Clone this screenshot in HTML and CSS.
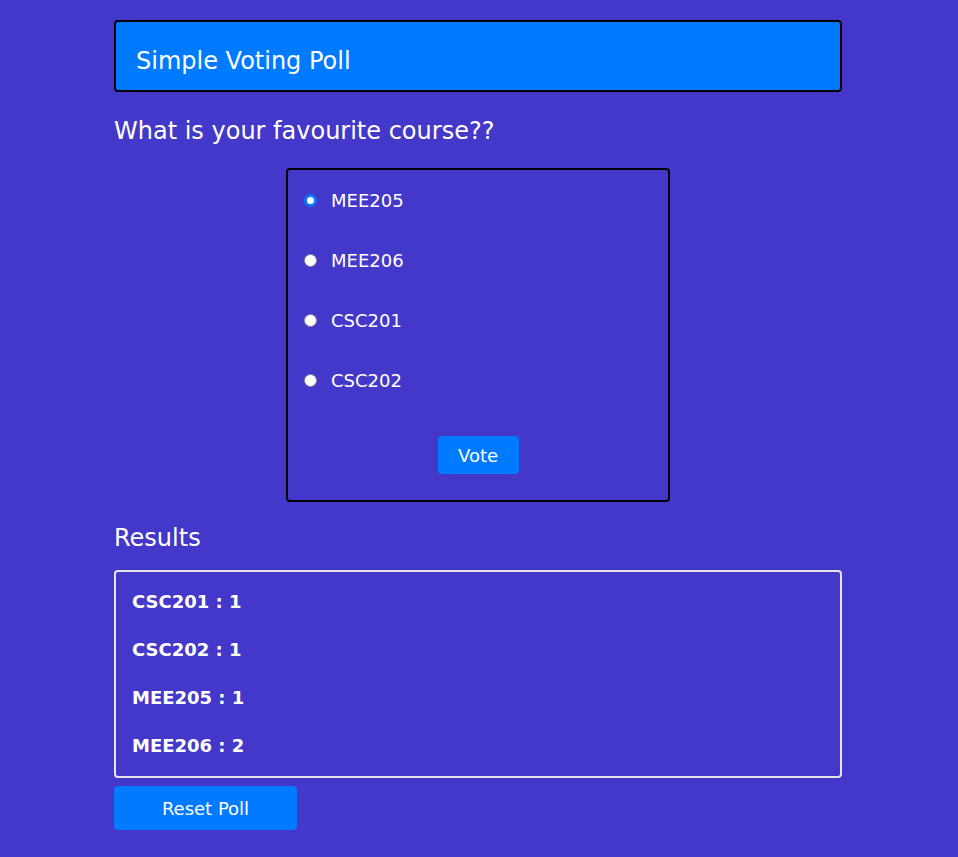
FILE: index.html
```html
<!DOCTYPE html>
<html lang="en">
<head>
<meta charset="utf-8">
<title>Simple Voting Poll</title>
<link rel="stylesheet" href="styles.css">
</head>
<body>
<div class="container">
  <header class="header">
    <h1 class="title">Simple Voting Poll</h1>
  </header>
  <h2 class="question">What is your favourite course??</h2>
  <form class="options">
    <label class="option"><input type="radio" name="course" value="MEE205" checked><span>MEE205</span></label>
    <label class="option"><input type="radio" name="course" value="MEE206"><span>MEE206</span></label>
    <label class="option"><input type="radio" name="course" value="CSC201"><span>CSC201</span></label>
    <label class="option"><input type="radio" name="course" value="CSC202"><span>CSC202</span></label>
    <div class="actions"><button type="button" class="btn btn-vote">Vote</button></div>
  </form>
  <h2 class="section-title">Results</h2>
  <div class="results">
    <div class="result">CSC201 : 1</div>
    <div class="result">CSC202 : 1</div>
    <div class="result">MEE205 : 1</div>
    <div class="result">MEE206 : 2</div>
  </div>
  <button type="button" class="btn btn-reset">Reset Poll</button>
</div>
</body>
</html>
```

FILE: styles.css
```css
* { box-sizing: border-box; }
html, body {
  margin: 0;
  padding: 0;
  background: #4338ca;
}
body {
  font-family: "DejaVu Sans", sans-serif;
  color: #ffffff;
}
.container {
  width: 728px;
  margin-left: calc(50% - 365px);
  padding-top: 20px;
  display: flex;
  flex-direction: column;
  align-items: stretch;
}
.header {
  background: #007bff;
  border: 2px solid #000;
  border-radius: 4px;
  padding: 25px 20px 15px;
}
.title {
  margin: 0;
  font-size: 24px;
  font-weight: normal;
  line-height: 28px;
}
.question, .section-title {
  margin: 25px 0 0;
  font-size: 24px;
  font-weight: normal;
  line-height: 28px;
}
.section-title { margin-top: 22px; }
.options {
  align-self: center;
  width: 384px;
  margin: 23px 0 0;
  border: 2px solid #000;
  border-radius: 4px;
  padding: 0 16px 26px;
  display: flex;
  flex-direction: column;
}
.option {
  height: 60px;
  display: flex;
  align-items: center;
  gap: 14px;
  font-size: 18px;
  line-height: 21px;
}
.option input {
  appearance: none;
  -webkit-appearance: none;
  margin: 1px 0 0;
  width: 13px;
  height: 13px;
  border-radius: 50%;
  background: #ffffff;
  border: 1.5px solid #8a8a94;
  flex: none;
}
.option input:checked {
  border: 3px solid #0a76f6;
}
.actions {
  display: flex;
  justify-content: center;
  margin-top: 26px;
}
.btn {
  font-family: "DejaVu Sans", sans-serif;
  font-size: 18px;
  color: #fff;
  background: #007bff;
  border: none;
  border-radius: 4px;
  cursor: pointer;
}
.btn-vote {
  width: 81px;
  height: 38px;
  padding: 0;
}
.results {
  margin-top: 18px;
  border: 2px solid #e6e6e6;
  border-radius: 4px;
  padding: 5px 16px 7px;
}
.result {
  height: 48px;
  display: flex;
  align-items: center;
  font-size: 18px;
  font-weight: bold;
}
.btn-reset {
  align-self: flex-start;
  margin-top: 8px;
  width: 183px;
  height: 44px;
  padding: 0;
}
```
